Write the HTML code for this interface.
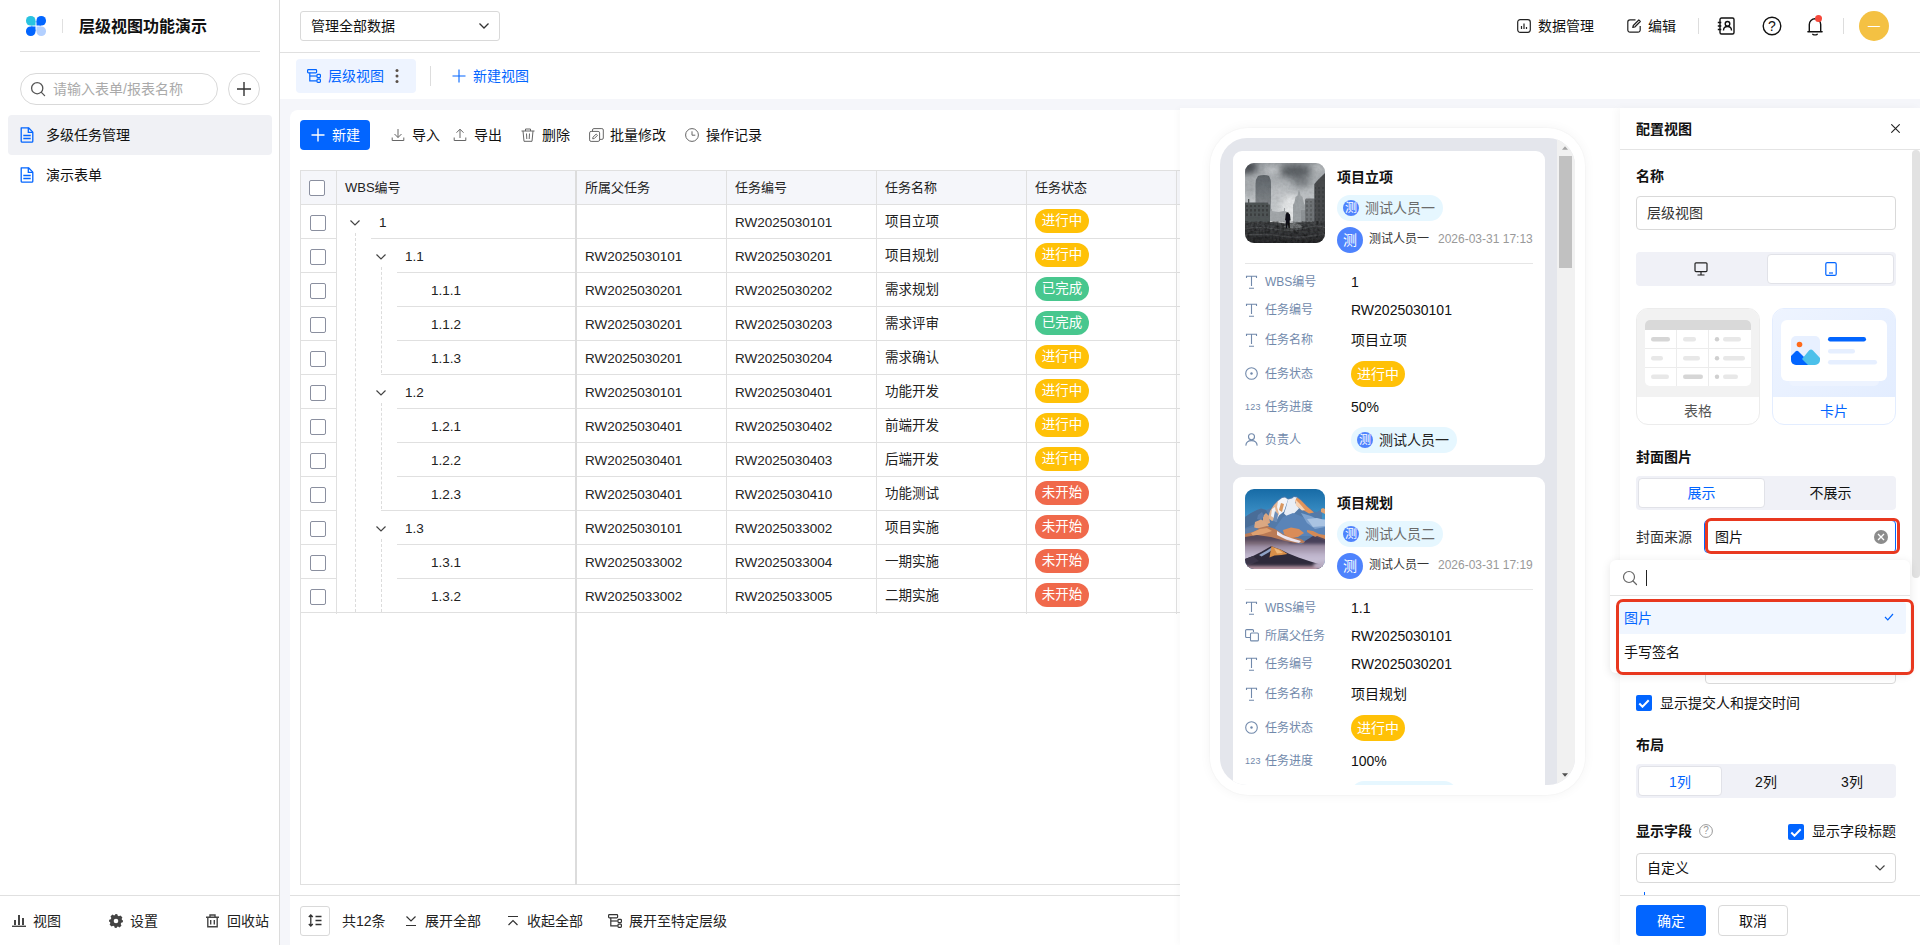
<!DOCTYPE html>
<html lang="zh-CN">
<head>
<meta charset="utf-8">
<title>层级视图功能演示</title>
<style>
*{box-sizing:border-box;margin:0;padding:0}
html,body{width:1920px;height:945px;overflow:hidden;background:#fff}
body{font-family:"Liberation Sans","Noto Sans CJK SC",sans-serif;font-size:14px;color:#1f2329;position:relative}
.abs{position:absolute}
.t{position:absolute;white-space:nowrap;line-height:20px;height:20px}
svg{display:block}
/* sidebar */
#side{position:absolute;left:0;top:0;width:280px;height:945px;background:#fff;border-right:1px solid #dcdcdc}
#main{position:absolute;left:280px;top:0;width:1640px;height:945px;background:#f5f6fa}
#top{position:absolute;left:0;top:0;width:1640px;height:53px;background:#fff;border-bottom:1px solid #e0e0e0}
#tabs{position:absolute;left:0;top:53px;width:1640px;height:46px;background:#fff}
.th{color:#222;font-size:13px}
.td{color:#222;font-size:13.5px}
.tag{height:24px;line-height:24px;border-radius:12px;width:54px;text-align:center;color:#fff;font-size:13.5px;white-space:nowrap}
.av16{width:16px;height:16px;border-radius:8px;background:#4e83fd;color:#fff;font-size:12px;line-height:16px;text-align:center;overflow:hidden}
.av26{width:26px;height:26px;border-radius:13px;background:#4e83fd;color:#fff;font-size:14px;line-height:26px;text-align:center}
.seg{background:#f0f1f7;border-radius:4px}
.segon{background:#fff;border:1px solid #e1e2e8;border-radius:4px}
</style>
</head>
<body>
<div id="side">
  <svg class="abs" style="left:26px;top:16px" width="20" height="20" viewBox="0 0 20 20">
    <rect x="0" y="0" width="9.5" height="9.5" rx="4.6" fill="#29c3e0"/>
    <rect x="10.5" y="0" width="9.5" height="9.5" rx="4.6" fill="#0265ff"/>
    <rect x="0" y="10.5" width="9.5" height="9.5" rx="4.6" fill="#0265ff"/>
    <rect x="10.5" y="10.5" width="9.5" height="9.5" rx="4.6" fill="#b3d0ff"/>
    <rect x="5" y="5" width="4.5" height="4.5" fill="#29c3e0"/>
    <rect x="10.5" y="5" width="4.5" height="4.5" fill="#0265ff"/>
    <rect x="5" y="10.5" width="4.5" height="4.5" fill="#0265ff"/>
    <rect x="10.5" y="10.5" width="4.5" height="4.5" fill="#b3d0ff"/>
  </svg>
  <div class="abs" style="left:62px;top:19px;width:1px;height:14px;background:#e0e0e0"></div>
  <div class="t" style="left:79px;top:16px;font-size:16px;font-weight:bold;line-height:22px;height:22px;color:#111">层级视图功能演示</div>
  <div class="abs" style="left:20px;top:51px;width:240px;height:1px;background:#e0e0e0"></div>
  <div class="abs" style="left:20px;top:73px;width:198px;height:32px;border:1px solid #d9d9d9;border-radius:16px"></div>
  <svg class="abs" style="left:30px;top:81px" width="16" height="16" viewBox="0 0 16 16" fill="none" stroke="#555" stroke-width="1.3"><circle cx="7.2" cy="7.2" r="5.6"/><path d="M11.4 11.4L14.6 14.6" stroke-linecap="round"/></svg>
  <div class="t" style="left:53px;top:79px;color:#aaa">请输入表单/报表名称</div>
  <div class="abs" style="left:228px;top:73px;width:32px;height:32px;border:1px solid #d9d9d9;border-radius:16px"></div>
  <svg class="abs" style="left:236px;top:81px" width="16" height="16" viewBox="0 0 16 16" stroke="#333" stroke-width="1.4"><path d="M8 1v14M1 8h14"/></svg>
  <div class="abs" style="left:8px;top:115px;width:264px;height:40px;background:#f0f1f5;border-radius:4px"></div>
  <svg class="abs docic" style="left:20px;top:127px" width="14" height="16" viewBox="0 0 14 16" fill="none" stroke="#0265ff" stroke-width="1.3"><path d="M1.2.8h7.3l4.3 4.3v9.1a1 1 0 0 1-1 1H2.2a1 1 0 0 1-1-1z" stroke-linejoin="round"/><path d="M8.3.8v4.5h4.5M3.3 8.5h7.4M3.3 11.5h7.4"/></svg>
  <div class="t" style="left:46px;top:125px;color:#111">多级任务管理</div>
  <svg class="abs docic" style="left:20px;top:167px" width="14" height="16" viewBox="0 0 14 16" fill="none" stroke="#0265ff" stroke-width="1.3"><path d="M1.2.8h7.3l4.3 4.3v9.1a1 1 0 0 1-1 1H2.2a1 1 0 0 1-1-1z" stroke-linejoin="round"/><path d="M8.3.8v4.5h4.5M3.3 8.5h7.4M3.3 11.5h7.4"/></svg>
  <div class="t" style="left:46px;top:165px;color:#111">演示表单</div>
  <div class="abs" style="left:0;top:895px;width:279px;height:1px;background:#e0e0e0"></div>
  <svg class="abs" style="left:12px;top:914px" width="14" height="14" viewBox="0 0 14 14" fill="#444"><rect x="0" y="11.6" width="14" height="1.4"/><rect x="2" y="6" width="2" height="5"/><rect x="6" y="1" width="2" height="10"/><rect x="10" y="4" width="2" height="7"/></svg>
  <div class="t" style="left:33px;top:911px;color:#222">视图</div>
  <svg class="abs" style="left:109px;top:914px" width="14" height="14" viewBox="0 0 14 14"><path fill="#444" d="M7 0l1.3.2.5 1.6 1.1.5 1.5-.8 1.1.9 .9 1.1-.8 1.5.5 1.1 1.6.5L14 7l-.2 1.300-1.600.500-.500 1.100.800 1.500-.900 1.100-1.100.900-1.500-.800-1.100.500-.500 1.600L7 14l-1.300-.200-.500-1.600-1.100-.500-1.500.800-1.100-.900-.900-1.100.800-1.500-.500-1.100-1.600-.500L0 7l.2-1.300 1.600-.5.5-1.100-.8-1.500.9-1.100 1.100-.9 1.500.8 1.100-.5.5-1.600z"/><circle cx="7" cy="7" r="2.3" fill="#fff"/></svg>
  <div class="t" style="left:130px;top:911px;color:#222">设置</div>
  <svg class="abs" style="left:206px;top:914px" width="13" height="14" viewBox="0 0 13 14" fill="none" stroke="#444" stroke-width="1.4"><path d="M0 3.2h13M4 3V1h5v2M1.800 3.500v9.300h9.400V3.500M4.700 6v4.500M8.300 6v4.500"/></svg>
  <div class="t" style="left:227px;top:911px;color:#222">回收站</div>
</div>
<div id="main">
  <div id="top">
    <div class="abs" style="left:20px;top:11px;width:200px;height:30px;border:1px solid #d9d9d9;border-radius:3px"></div>
    <div class="t" style="left:31px;top:16px;color:#111">管理全部数据</div>
    <svg class="abs" style="left:198px;top:22px" width="12" height="8" viewBox="0 0 12 8" fill="none" stroke="#333" stroke-width="1.3"><path d="M1.500 1.500l4.500 4.500 4.500-4.500"/></svg>
    <svg class="abs" style="left:1237px;top:19px" width="14" height="14" viewBox="0 0 14 14" fill="none" stroke="#222" stroke-width="1.2"><rect x=".7" y=".7" width="12.600" height="12.600" rx="2.500"/><path d="M4.500 7v3M7 4.500v5.500M9.500 8v2"/></svg>
    <div class="t" style="left:1258px;top:16px;color:#111">数据管理</div>
    <svg class="abs" style="left:1347px;top:19px" width="15" height="14" viewBox="0 0 15 14" fill="none" stroke="#222" stroke-width="1.2"><path d="M8.500.8H3a2.200 2.200 0 0 0-2.200 2.200v8a2.200 2.200 0 0 0 2.200 2.200h8a2.200 2.200 0 0 0 2.200-2.200V7"/><path d="M11.800 1l1.500 1.500-5.500 5.500-2 .5.500-2z" stroke-linejoin="round"/></svg>
    <div class="t" style="left:1368px;top:16px;color:#111">编辑</div>
    <div class="abs" style="left:1418px;top:18px;width:1px;height:16px;background:#ddd"></div>
    <svg class="abs" style="left:1437px;top:17px" width="18" height="18" viewBox="0 0 18 18" fill="none" stroke="#111" stroke-width="1.4"><rect x="3" y="1" width="14" height="16" rx="1.500"/><path d="M.8 5.500h3.500M.8 9h3.500M.8 12.500h3.500"/><circle cx="10.500" cy="6.800" r="2.300"/><path d="M6.500 13.500c0-2.600 1.700-4 4-4s4 1.400 4 4"/></svg>
    <svg class="abs" style="left:1482px;top:16px" width="20" height="20" viewBox="0 0 20 20" fill="none" stroke="#111" stroke-width="1.4"><circle cx="10" cy="10" r="8.800"/></svg>
    <div class="t" style="left:1482px;top:16px;width:20px;text-align:center;font-size:14px;color:#111">?</div>
    <svg class="abs" style="left:1527px;top:17px" width="16" height="19" viewBox="0 0 16 19" fill="none" stroke="#111" stroke-width="1.400"><path d="M2.300 14.800V7.500a5.700 5.700 0 0 1 11.400 0v7.300"/><path d="M.9 14.800h14.200" stroke-linecap="round"/><path d="M5.800 17.300q2.200 1.200 4.400 0" stroke-linecap="round"/></svg>
    <div class="abs" style="left:1535px;top:15px;width:7px;height:7px;border-radius:4px;background:#f5483b"></div>
    <div class="abs" style="left:1563px;top:18px;width:1px;height:16px;background:#ddd"></div>
    <div class="abs" style="left:1579px;top:11px;width:30px;height:30px;border-radius:15px;background:#f4c143"></div>
    <div class="t" style="left:1579px;top:16px;width:30px;text-align:center;font-size:12px;color:#fff">—</div>
  </div>
  <div id="tabs">
    <div class="abs" style="left:16px;top:6px;width:120px;height:34px;background:#eef4ff;border-radius:4px"></div>
    <svg class="abs treeic" style="left:27px;top:16px" width="15" height="14" viewBox="0 0 15 14" fill="none" stroke="#0265ff" stroke-width="1.200"><rect x=".6" y=".6" width="9" height="3.200" rx=".8"/><path d="M2.800 3.800v8h7"/><path d="M2.800 7h7"/><rect x="10" y="5.400" width="3.400" height="3.200" rx=".8"/><rect x="10" y="10.200" width="3.400" height="3.200" rx=".8"/></svg>
    <div class="t" style="left:48px;top:13px;color:#0265ff">层级视图</div>
    <svg class="abs" style="left:115px;top:15px" width="4" height="16" viewBox="0 0 4 16" fill="#5a5048"><circle cx="2" cy="2.500" r="1.500"/><circle cx="2" cy="8" r="1.500"/><circle cx="2" cy="13.500" r="1.500"/></svg>
    <div class="abs" style="left:150px;top:13px;width:1px;height:20px;background:#ddd"></div>
    <svg class="abs" style="left:172px;top:16px" width="14" height="14" viewBox="0 0 14 14" stroke="#0265ff" stroke-width="1.100"><path d="M7 .5v13M.5 7h13"/></svg>
    <div class="t" style="left:193px;top:13px;color:#0265ff">新建视图</div>
  </div>

  <!--TABLE-->
  <div id="card" class="abs" style="left:10px;top:110px;width:1630px;height:785px;background:#fff;border-radius:8px 0 0 0"></div>
  <div id="foot" class="abs" style="left:10px;top:895px;width:1630px;height:50px;background:#fff;border-top:1px solid #e0e0e0"></div>
  <div class="abs" style="left:20px;top:120px;width:70px;height:30px;background:#0265ff;border-radius:4px"></div>
  <svg class="abs" style="left:31px;top:128px" width="14" height="14" viewBox="0 0 14 14" stroke="#fff" stroke-width="1.4"><path d="M7 .5v13M.5 7h13"/></svg>
  <div class="t" style="left:52px;top:125px;color:#fff">新建</div>
  <svg class="abs" style="left:111px;top:128px" width="14" height="14" viewBox="0 0 14 14" fill="none" stroke="#666" stroke-width="1"><path d="M7 1v8.500M3.500 6l3.500 3.500 3.500-3.500M1.200 9.500v3h11.600v-3"/></svg>
  <div class="t" style="left:132px;top:125px;color:#111">导入</div>
  <svg class="abs" style="left:173px;top:128px" width="14" height="14" viewBox="0 0 14 14" fill="none" stroke="#666" stroke-width="1"><path d="M7 10V1.200M3.500 4.700L7 1.200l3.500 3.500M1.200 9.500v3h11.600v-3"/></svg>
  <div class="t" style="left:194px;top:125px;color:#111">导出</div>
  <svg class="abs" style="left:241px;top:128px" width="14" height="14" viewBox="0 0 14 14" fill="none" stroke="#666" stroke-width="1"><path d="M.5 3h13M4.500 3V1h5v2M2 3l1 10.300h8l1-10.300M5.500 5.500l.3 5.500M8.500 5.500l-.3 5.500"/></svg>
  <div class="t" style="left:262px;top:125px;color:#111">删除</div>
  <svg class="abs" style="left:309px;top:128px" width="15" height="14" viewBox="0 0 15 14" fill="none" stroke="#666" stroke-width="1"><rect x=".6" y="3.400" width="10" height="10" rx="1.500"/><path d="M3.500 3.400V2a1.400 1.400 0 0 1 1.400-1.400h8a1.400 1.400 0 0 1 1.400 1.400v8a1.400 1.400 0 0 1-1.400 1.400h-2.300"/><path d="M7.200 6l1.300 1.300-3.200 3.200-1.600.3.300-1.600z" stroke-linejoin="round"/></svg>
  <div class="t" style="left:330px;top:125px;color:#111">批量修改</div>
  <svg class="abs" style="left:405px;top:128px" width="14" height="14" viewBox="0 0 14 14" fill="none" stroke="#666" stroke-width="1"><circle cx="7" cy="7" r="6.400"/><path d="M7 3.300V7.200h3.300"/></svg>
  <div class="t" style="left:426px;top:125px;color:#111">操作记录</div>
  <div id="tbl" class="abs" style="left:20px;top:170px;width:880px;height:715px;border:1px solid #e0e0e0;border-right:none"></div>
  <div class="abs" style="left:21px;top:171px;width:879px;height:33px;background:#f5f6fa"></div>
  <div class="abs" style="left:21px;top:204px;width:879px;height:1px;background:#e0e0e0"></div>
  <div class="abs" style="left:56px;top:171px;width:1px;height:443px;background:#e0e0e0"></div>
  <div class="abs" style="left:295px;top:171px;width:2px;height:714px;background:#dcdcdc"></div>
  <div class="abs" style="left:446px;top:171px;width:1px;height:443px;background:#e0e0e0"></div>
  <div class="abs" style="left:596px;top:171px;width:1px;height:443px;background:#e0e0e0"></div>
  <div class="abs" style="left:746px;top:171px;width:1px;height:443px;background:#e0e0e0"></div>
  <div class="abs" style="left:896px;top:171px;width:1px;height:443px;background:#e0e0e0"></div>
  <div class="abs" style="left:29px;top:180px;width:16px;height:16px;border:1px solid #8a8f9f;border-radius:2px;background:#fff"></div>
  <div class="t th" style="left:65px;top:178px">WBS编号</div>
  <div class="t th" style="left:305px;top:178px">所属父任务</div>
  <div class="t th" style="left:455px;top:178px">任务编号</div>
  <div class="t th" style="left:605px;top:178px">任务名称</div>
  <div class="t th" style="left:755px;top:178px">任务状态</div>
  <div class="abs" style="left:21px;top:238px;width:35px;height:1px;background:#e0e0e0"></div>
  <div class="abs" style="left:30px;top:215px;width:16px;height:16px;border:1px solid #8a8f9f;border-radius:2px;background:#fff"></div>
  <svg class="abs" style="left:69px;top:219px" width="12" height="8" viewBox="0 0 12 8" fill="none" stroke="#444" stroke-width="1.2"><path d="M1.5 1.500l4.500 4.500 4.500-4.500"/></svg>
  <div class="t td" style="left:99px;top:213px">1</div>
  <div class="t td" style="left:455px;top:213px">RW2025030101</div>
  <div class="t td" style="left:605px;top:212px">项目立项</div>
  <div class="abs tag" style="left:755px;top:209px;background:#ffc107">进行中</div>
  <div class="abs" style="left:297px;top:238px;width:603px;height:1px;background:#e0e0e0"></div>
  <div class="abs" style="left:21px;top:272px;width:35px;height:1px;background:#e0e0e0"></div>
  <div class="abs" style="left:30px;top:249px;width:16px;height:16px;border:1px solid #8a8f9f;border-radius:2px;background:#fff"></div>
  <svg class="abs" style="left:95px;top:253px" width="12" height="8" viewBox="0 0 12 8" fill="none" stroke="#444" stroke-width="1.2"><path d="M1.5 1.500l4.500 4.500 4.500-4.500"/></svg>
  <div class="t td" style="left:125px;top:247px">1.1</div>
  <div class="t td" style="left:305px;top:247px">RW2025030101</div>
  <div class="t td" style="left:455px;top:247px">RW2025030201</div>
  <div class="t td" style="left:605px;top:246px">项目规划</div>
  <div class="abs tag" style="left:755px;top:243px;background:#ffc107">进行中</div>
  <div class="abs" style="left:297px;top:272px;width:603px;height:1px;background:#e0e0e0"></div>
  <div class="abs" style="left:21px;top:306px;width:35px;height:1px;background:#e0e0e0"></div>
  <div class="abs" style="left:30px;top:283px;width:16px;height:16px;border:1px solid #8a8f9f;border-radius:2px;background:#fff"></div>
  <div class="t td" style="left:151px;top:281px">1.1.1</div>
  <div class="t td" style="left:305px;top:281px">RW2025030201</div>
  <div class="t td" style="left:455px;top:281px">RW2025030202</div>
  <div class="t td" style="left:605px;top:280px">需求规划</div>
  <div class="abs tag" style="left:755px;top:277px;background:#48c78e">已完成</div>
  <div class="abs" style="left:297px;top:306px;width:603px;height:1px;background:#e0e0e0"></div>
  <div class="abs" style="left:21px;top:340px;width:35px;height:1px;background:#e0e0e0"></div>
  <div class="abs" style="left:30px;top:317px;width:16px;height:16px;border:1px solid #8a8f9f;border-radius:2px;background:#fff"></div>
  <div class="t td" style="left:151px;top:315px">1.1.2</div>
  <div class="t td" style="left:305px;top:315px">RW2025030201</div>
  <div class="t td" style="left:455px;top:315px">RW2025030203</div>
  <div class="t td" style="left:605px;top:314px">需求评审</div>
  <div class="abs tag" style="left:755px;top:311px;background:#48c78e">已完成</div>
  <div class="abs" style="left:297px;top:340px;width:603px;height:1px;background:#e0e0e0"></div>
  <div class="abs" style="left:21px;top:374px;width:35px;height:1px;background:#e0e0e0"></div>
  <div class="abs" style="left:30px;top:351px;width:16px;height:16px;border:1px solid #8a8f9f;border-radius:2px;background:#fff"></div>
  <div class="t td" style="left:151px;top:349px">1.1.3</div>
  <div class="t td" style="left:305px;top:349px">RW2025030201</div>
  <div class="t td" style="left:455px;top:349px">RW2025030204</div>
  <div class="t td" style="left:605px;top:348px">需求确认</div>
  <div class="abs tag" style="left:755px;top:345px;background:#ffc107">进行中</div>
  <div class="abs" style="left:297px;top:374px;width:603px;height:1px;background:#e0e0e0"></div>
  <div class="abs" style="left:21px;top:408px;width:35px;height:1px;background:#e0e0e0"></div>
  <div class="abs" style="left:30px;top:385px;width:16px;height:16px;border:1px solid #8a8f9f;border-radius:2px;background:#fff"></div>
  <svg class="abs" style="left:95px;top:389px" width="12" height="8" viewBox="0 0 12 8" fill="none" stroke="#444" stroke-width="1.2"><path d="M1.5 1.500l4.500 4.500 4.500-4.500"/></svg>
  <div class="t td" style="left:125px;top:383px">1.2</div>
  <div class="t td" style="left:305px;top:383px">RW2025030101</div>
  <div class="t td" style="left:455px;top:383px">RW2025030401</div>
  <div class="t td" style="left:605px;top:382px">功能开发</div>
  <div class="abs tag" style="left:755px;top:379px;background:#ffc107">进行中</div>
  <div class="abs" style="left:297px;top:408px;width:603px;height:1px;background:#e0e0e0"></div>
  <div class="abs" style="left:21px;top:442px;width:35px;height:1px;background:#e0e0e0"></div>
  <div class="abs" style="left:30px;top:419px;width:16px;height:16px;border:1px solid #8a8f9f;border-radius:2px;background:#fff"></div>
  <div class="t td" style="left:151px;top:417px">1.2.1</div>
  <div class="t td" style="left:305px;top:417px">RW2025030401</div>
  <div class="t td" style="left:455px;top:417px">RW2025030402</div>
  <div class="t td" style="left:605px;top:416px">前端开发</div>
  <div class="abs tag" style="left:755px;top:413px;background:#ffc107">进行中</div>
  <div class="abs" style="left:297px;top:442px;width:603px;height:1px;background:#e0e0e0"></div>
  <div class="abs" style="left:21px;top:476px;width:35px;height:1px;background:#e0e0e0"></div>
  <div class="abs" style="left:30px;top:453px;width:16px;height:16px;border:1px solid #8a8f9f;border-radius:2px;background:#fff"></div>
  <div class="t td" style="left:151px;top:451px">1.2.2</div>
  <div class="t td" style="left:305px;top:451px">RW2025030401</div>
  <div class="t td" style="left:455px;top:451px">RW2025030403</div>
  <div class="t td" style="left:605px;top:450px">后端开发</div>
  <div class="abs tag" style="left:755px;top:447px;background:#ffc107">进行中</div>
  <div class="abs" style="left:297px;top:476px;width:603px;height:1px;background:#e0e0e0"></div>
  <div class="abs" style="left:21px;top:510px;width:35px;height:1px;background:#e0e0e0"></div>
  <div class="abs" style="left:30px;top:487px;width:16px;height:16px;border:1px solid #8a8f9f;border-radius:2px;background:#fff"></div>
  <div class="t td" style="left:151px;top:485px">1.2.3</div>
  <div class="t td" style="left:305px;top:485px">RW2025030401</div>
  <div class="t td" style="left:455px;top:485px">RW2025030410</div>
  <div class="t td" style="left:605px;top:484px">功能测试</div>
  <div class="abs tag" style="left:755px;top:481px;background:#f0694b">未开始</div>
  <div class="abs" style="left:297px;top:510px;width:603px;height:1px;background:#e0e0e0"></div>
  <div class="abs" style="left:21px;top:544px;width:35px;height:1px;background:#e0e0e0"></div>
  <div class="abs" style="left:30px;top:521px;width:16px;height:16px;border:1px solid #8a8f9f;border-radius:2px;background:#fff"></div>
  <svg class="abs" style="left:95px;top:525px" width="12" height="8" viewBox="0 0 12 8" fill="none" stroke="#444" stroke-width="1.2"><path d="M1.5 1.500l4.500 4.500 4.500-4.500"/></svg>
  <div class="t td" style="left:125px;top:519px">1.3</div>
  <div class="t td" style="left:305px;top:519px">RW2025030101</div>
  <div class="t td" style="left:455px;top:519px">RW2025033002</div>
  <div class="t td" style="left:605px;top:518px">项目实施</div>
  <div class="abs tag" style="left:755px;top:515px;background:#f0694b">未开始</div>
  <div class="abs" style="left:297px;top:544px;width:603px;height:1px;background:#e0e0e0"></div>
  <div class="abs" style="left:21px;top:578px;width:35px;height:1px;background:#e0e0e0"></div>
  <div class="abs" style="left:30px;top:555px;width:16px;height:16px;border:1px solid #8a8f9f;border-radius:2px;background:#fff"></div>
  <div class="t td" style="left:151px;top:553px">1.3.1</div>
  <div class="t td" style="left:305px;top:553px">RW2025033002</div>
  <div class="t td" style="left:455px;top:553px">RW2025033004</div>
  <div class="t td" style="left:605px;top:552px">一期实施</div>
  <div class="abs tag" style="left:755px;top:549px;background:#f0694b">未开始</div>
  <div class="abs" style="left:297px;top:578px;width:603px;height:1px;background:#e0e0e0"></div>
  <div class="abs" style="left:21px;top:612px;width:35px;height:1px;background:#e0e0e0"></div>
  <div class="abs" style="left:30px;top:589px;width:16px;height:16px;border:1px solid #8a8f9f;border-radius:2px;background:#fff"></div>
  <div class="t td" style="left:151px;top:587px">1.3.2</div>
  <div class="t td" style="left:305px;top:587px">RW2025033002</div>
  <div class="t td" style="left:455px;top:587px">RW2025033005</div>
  <div class="t td" style="left:605px;top:586px">二期实施</div>
  <div class="abs tag" style="left:755px;top:583px;background:#f0694b">未开始</div>
  <div class="abs" style="left:297px;top:612px;width:603px;height:1px;background:#e0e0e0"></div>
  <div class="abs" style="left:91px;top:238px;width:204px;height:1px;background:#e0e0e0"></div>
  <div class="abs" style="left:117px;top:272px;width:178px;height:1px;background:#e0e0e0"></div>
  <div class="abs" style="left:117px;top:306px;width:178px;height:1px;background:#e0e0e0"></div>
  <div class="abs" style="left:117px;top:340px;width:178px;height:1px;background:#e0e0e0"></div>
  <div class="abs" style="left:101px;top:374px;width:194px;height:1px;background:#e0e0e0"></div>
  <div class="abs" style="left:117px;top:408px;width:178px;height:1px;background:#e0e0e0"></div>
  <div class="abs" style="left:117px;top:442px;width:178px;height:1px;background:#e0e0e0"></div>
  <div class="abs" style="left:117px;top:476px;width:178px;height:1px;background:#e0e0e0"></div>
  <div class="abs" style="left:101px;top:510px;width:194px;height:1px;background:#e0e0e0"></div>
  <div class="abs" style="left:117px;top:544px;width:178px;height:1px;background:#e0e0e0"></div>
  <div class="abs" style="left:117px;top:578px;width:178px;height:1px;background:#e0e0e0"></div>
  <div class="abs" style="left:57px;top:612px;width:238px;height:1px;background:#e0e0e0"></div>
  <div class="abs" style="left:75px;top:233px;width:0;height:379px;border-left:1px dashed #dcdcdc"></div>
  <div class="abs" style="left:101px;top:267px;width:0;height:106px;border-left:1px dashed #dcdcdc"></div>
  <div class="abs" style="left:101px;top:403px;width:0;height:106px;border-left:1px dashed #dcdcdc"></div>
  <div class="abs" style="left:101px;top:539px;width:0;height:73px;border-left:1px dashed #dcdcdc"></div>
  <div class="abs" style="left:20px;top:906px;width:30px;height:30px;border:1px solid #d9d9d9;border-radius:3px"></div>
  <svg class="abs" style="left:28px;top:914px" width="14" height="13" viewBox="0 0 14 13" fill="none" stroke="#333" stroke-width="1.300"><path d="M2.800 1v11M.8 3l2-2 2 2M.8 10l2 2 2-2M7.500 2.500h6M7.500 6.500h6M7.500 10.500h6"/></svg>
  <div class="t" style="left:62px;top:911px;color:#222">共12条</div>
  <svg class="abs" style="left:125px;top:915px" width="12" height="12" viewBox="0 0 12 12" fill="none" stroke="#333" stroke-width="1.200"><path d="M1.500 1.500l4.500 4.500 4.500-4.500M1 10.500h10"/></svg>
  <div class="t" style="left:145px;top:911px;color:#222">展开全部</div>
  <svg class="abs" style="left:227px;top:915px" width="12" height="12" viewBox="0 0 12 12" fill="none" stroke="#333" stroke-width="1.200"><path d="M1 1.500h10M1.500 10l4.500-4.500 4.500 4.500"/></svg>
  <div class="t" style="left:247px;top:911px;color:#222">收起全部</div>
  <svg class="abs" style="left:328px;top:914px" width="15" height="14" viewBox="0 0 15 14" fill="none" stroke="#333" stroke-width="1.200"><rect x=".6" y=".6" width="9" height="3.200" rx=".8"/><path d="M2.800 3.800v8h7"/><path d="M2.800 7h7"/><rect x="10" y="5.400" width="3.400" height="3.200" rx=".8"/><rect x="10" y="10.200" width="3.400" height="3.200" rx=".8"/></svg>
  <div class="t" style="left:349px;top:911px;color:#222">展开至特定层级</div>
  <!--/TABLE-->
</div>

<!--PREVIEW-->
<div id="pv" class="abs" style="left:1180px;top:108px;width:440px;height:837px;background:#fff;box-shadow:-3px 0 6px rgba(0,0,0,.025)"></div>
<div id="phone" class="abs" style="left:1210px;top:128px;width:375px;height:667px;border-radius:38px;background:#fff;box-shadow:0 0 12px rgba(0,0,0,.05),0 0 0 1px rgba(0,0,0,.015)"></div>
<div id="scr" class="abs" style="left:1220px;top:138px;width:355px;height:647px;border-radius:27px;background:#e4e6ec;overflow:hidden">
<div class="abs" style="left:337px;top:0;width:18px;height:647px;background:#f1f1f1"></div>
<div class="abs" style="left:339px;top:18px;width:13px;height:112px;background:#c1c1c1"></div>
<svg class="abs" style="left:342px;top:8px" width="6" height="4" viewBox="0 0 6 4"><path d="M0 3.700L3 .3 6 3.700z" fill="#a3a3a3"/></svg>
<svg class="abs" style="left:342px;top:635px" width="6" height="4" viewBox="0 0 6 4"><path d="M0 .3L3 3.700 6 .3z" fill="#505050"/></svg>
<div class="abs" style="left:13px;top:13px;width:312px;height:314px;background:#fff;border-radius:9px"></div>
<svg class="abs" style="left:25px;top:25px;border-radius:9px" width="80" height="80" viewBox="0 0 80 80">
<defs><linearGradient id="sk1" x1="0" y1="0" x2="0" y2="1"><stop offset="0" stop-color="#979ca0"/><stop offset=".4" stop-color="#bcc0c3"/><stop offset=".75" stop-color="#d2d5d7"/></linearGradient>
<linearGradient id="tw1" x1="0" y1="0" x2="0" y2="1"><stop offset="0" stop-color="#5f656a"/><stop offset=".7" stop-color="#7d8286"/><stop offset="1" stop-color="#969b9f"/></linearGradient>
<linearGradient id="gr1" x1="0" y1="0" x2="0" y2="1"><stop offset="0" stop-color="#47494b"/><stop offset="1" stop-color="#2b2c2e"/></linearGradient>
<filter id="bl1" x="-20%" y="-20%" width="140%" height="140%"><feGaussianBlur stdDeviation=".55"/></filter><filter id="bl1b" x="-50%" y="-50%" width="200%" height="200%"><feGaussianBlur stdDeviation="3.200"/></filter>
<filter id="nz1" x="0" y="0" width="100%" height="100%"><feTurbulence type="fractalNoise" baseFrequency=".35" numOctaves="2" seed="3"/><feColorMatrix values="0 0 0 0 0  0 0 0 0 0  0 0 0 0 0  .9 .9 .9 0 -1.050"/></filter><pattern id="win" width="4" height="4.500" patternUnits="userSpaceOnUse"><rect x="1" y="1" width="2" height="2.500" fill="#2a2c2e" opacity=".55"/></pattern></defs>
<rect width="80" height="80" fill="url(#sk1)"/>
<g filter="url(#bl1b)"><ellipse cx="3" cy="4" rx="9" ry="7" fill="#4c5054"/><ellipse cx="50" cy="8" rx="16" ry="7" fill="#5d6266"/><ellipse cx="57" cy="19" rx="10" ry="5" fill="#7b8084"/><ellipse cx="27" cy="7" rx="8" ry="4" fill="#c6c9cc"/><ellipse cx="74" cy="5" rx="5" ry="4" fill="#c6c9cb"/><ellipse cx="5" cy="24" rx="7" ry="8" fill="#a6aaad"/><ellipse cx="46" cy="46" rx="10" ry="14" fill="#e6e8e9"/><ellipse cx="34" cy="30" rx="7" ry="6" fill="#c0c3c6"/><ellipse cx="68" cy="26" rx="5" ry="5" fill="#b9bdc0"/></g>
<g filter="url(#bl1)">
<path d="M10.500 50V21q0-5 2.500-8 2.500-1 6-1 3.500 0 5 1 2 3 2 8V50z" fill="url(#tw1)"/>
<path d="M24 58V49l2-1v-2h1v2l6 1 6-1v-3h1v3l2 1v10z" fill="#a3a7aa"/>
<path d="M48 60V42l1.500-3 1-5 2-1.500 1-5 .5-.5.500.500 1 5 2 1.500 1 5 1.500 3V60z" fill="#9ea3a6"/>
<path d="M56 60V47h5v13z" fill="#8f9497"/>
<path d="M60 60V36.500l1-1h8.500l.5 1V60z" fill="#717578"/>
<rect x="61" y="38" width="8" height="20" fill="url(#win)" opacity=".5"/>
<path d="M0 61V39.500h3V36h1.300v3.500H23l.5 2h1.500V61z" fill="#505457"/>
<rect x="1" y="42" width="22" height="13" fill="url(#win)"/>
<path d="M69.300 80V21l4-4.500 6.700-6.500V80z" fill="#484b4e"/>
<rect x="70" y="24" width="10" height="36" fill="url(#win)" opacity=".7"/>
<path d="M0 59.500q20-2 40 1 20-2.500 40-1V80H0z" fill="url(#gr1)"/>
<path d="M42 62q6-4 12-1l4 3q-10 3-20 0z" fill="#7d8082"/>
<path d="M0 66q15-3 30 0t30-1 20 0" stroke="#55585a" stroke-width="1.200" fill="none"/>
<path d="M0 72q20-2 36 1t44-2" stroke="#4b4d4f" stroke-width="1.500" fill="none"/>
</g>
<rect x="0" y="58" width="80" height="22" filter="url(#nz1)" opacity=".55"/><rect x="0" y="0" width="80" height="58" filter="url(#nz1)" opacity=".07"/><path d="M41.200 50.600a1.300 1.300 0 1 1 2.600 0l1.200 1 .6 5.600-.9.300.2 7.800h-1.500l-.5-5.400-.7 5.400h-1.500l.3-7.800-.9-.3.600-5.600z" fill="#101112" filter="url(#bl1)"/>
</svg>
<div class="t" style="left:117px;top:29px;font-weight:bold;color:#111">项目立项</div>
<div class="abs" style="left:117px;top:57px;width:106px;height:26px;border-radius:13px;background:#e6f7ff"></div><div class="abs av16" style="left:123px;top:62px">测</div><div class="t" style="left:145px;top:60px;color:#6b6b6b">测试人员一</div>
<div class="abs av26" style="left:117px;top:89px">测</div>
<div class="t" style="left:149px;top:91px;font-size:12px;color:#333">测试人员一</div>
<div class="t" style="left:218px;top:91px;font-size:12px;color:#999">2026-03-31 17:13</div>
<div class="abs" style="left:25px;top:125px;width:288px;height:1px;background:#e6e6e6"></div>
<svg class="abs" style="left:25px;top:137px" width="13" height="14" viewBox="0 0 13 14" fill="none" stroke="#7189ab" stroke-width="1.100"><path d="M1.500 3V1.200h10V3M6.500 1.200V11M4 13.200h5"/></svg>
<div class="t" style="left:45px;top:134px;font-size:12px;color:#7189ab">WBS编号</div>
<div class="t" style="left:131px;top:134px;color:#111">1</div>
<svg class="abs" style="left:25px;top:165px" width="13" height="14" viewBox="0 0 13 14" fill="none" stroke="#7189ab" stroke-width="1.100"><path d="M1.500 3V1.200h10V3M6.500 1.200V11M4 13.200h5"/></svg>
<div class="t" style="left:45px;top:162px;font-size:12px;color:#7189ab">任务编号</div>
<div class="t" style="left:131px;top:162px;color:#111">RW2025030101</div>
<svg class="abs" style="left:25px;top:195px" width="13" height="14" viewBox="0 0 13 14" fill="none" stroke="#7189ab" stroke-width="1.100"><path d="M1.500 3V1.200h10V3M6.500 1.200V11M4 13.200h5"/></svg>
<div class="t" style="left:45px;top:192px;font-size:12px;color:#7189ab">任务名称</div>
<div class="t" style="left:131px;top:192px;color:#111">项目立项</div>
<svg class="abs" style="left:25px;top:229px" width="13" height="13" viewBox="0 0 13 13" fill="none" stroke="#7189ab" stroke-width="1.100"><circle cx="6.500" cy="6.500" r="5.800"/><circle cx="6.500" cy="6.500" r="1.200" fill="#7189ab" stroke="none"/></svg>
<div class="t" style="left:45px;top:226px;font-size:12px;color:#7189ab">任务状态</div>
<div class="abs" style="left:131px;top:223px;width:54px;height:26px;line-height:26px;border-radius:13px;background:#ffc107;color:#fff;text-align:center;font-size:14px">进行中</div>
<div class="t" style="left:25px;top:259px;font-size:9px;color:#7189ab;letter-spacing:.2px">123</div>
<div class="t" style="left:45px;top:259px;font-size:12px;color:#7189ab">任务进度</div>
<div class="t" style="left:131px;top:259px;color:#111">50%</div>
<svg class="abs" style="left:25px;top:295px" width="13" height="13" viewBox="0 0 13 13" fill="none" stroke="#7189ab" stroke-width="1.100"><circle cx="6.500" cy="3.800" r="3"/><path d="M.8 12.600c.3-3.400 2.600-5 5.700-5s5.400 1.600 5.700 5"/></svg>
<div class="t" style="left:45px;top:292px;font-size:12px;color:#7189ab">负责人</div>
<div class="abs" style="left:131px;top:289px;width:106px;height:26px;border-radius:13px;background:#e6f7ff"></div><div class="abs av16" style="left:137px;top:294px">测</div><div class="t" style="left:159px;top:292px;color:#222">测试人员一</div>
<div class="abs" style="left:13px;top:339px;width:312px;height:400px;background:#fff;border-radius:9px"></div>
<svg class="abs" style="left:25px;top:351px;border-radius:9px" width="80" height="80" viewBox="0 0 80 80">
<defs><linearGradient id="sk2" x1="0" y1="0" x2="0" y2="1"><stop offset="0" stop-color="#176ba6"/><stop offset=".35" stop-color="#3f93c9"/></linearGradient>
<linearGradient id="ms2" x1="0" y1="0" x2="0" y2="1"><stop offset="0" stop-color="#8f7f95"/><stop offset=".4" stop-color="#c1b8cf"/><stop offset="1" stop-color="#d2ccdc"/></linearGradient>
<filter id="bl2" x="-20%" y="-20%" width="140%" height="140%"><feGaussianBlur stdDeviation=".6"/></filter><filter id="bl2b" x="-50%" y="-50%" width="200%" height="200%"><feGaussianBlur stdDeviation="1.800"/></filter></defs>
<rect width="80" height="80" fill="url(#sk2)"/>
<g filter="url(#bl2)">
<path d="M0 28l6-4 6-3 4-1.500 5 1.500 5-2 3-4 4-4 4-3 3-.6 3 2 4-1 2-1.500 3 .5 4 3 6 6 7 6 3 .5 3-2 2 .5V56H0z" fill="#527aa9"/>
<path d="M0 28l6-4 6-3 4-1.500 5 1.500 3 6-6 6-8 2-10 4z" fill="#4a6d98"/>
<path d="M33 12l4-3 3-.6 3 2-2 6-2 6-5 4-3 6-4-5 1-8z" fill="#f3f5f9"/>
<path d="M43 10.400l4-1 2-1.500 3 .5-2 5 4 6-5 5-6 4-4-4 2-6z" fill="#e9eef6"/>
<path d="M52 8.400l4 3 6 6 7 6-5 1-6-3.500-5-5-3-4z" fill="#e3945a"/>
<path d="M50 10l5 5 5 6-3 .5-6-5z" fill="#f6d3b5"/>
<path d="M29 16l4-4-1 6 2 7-3 5-4 2-4-3 2-7z" fill="#e3b795"/><path d="M27 20l3-2 1 6-2 5-3-2z" fill="#f1f3f7"/><path d="M30 22l3 3-1 8-4-1z" fill="#6c8db8"/>
<path d="M36 14l3 1-2 8-3-2z" fill="#d9975f"/>
<path d="M18 27l3-3 3 3 1 7-5 2-2-4z" fill="#d9a580"/><path d="M13 26l4-3 2 4-3 4-4-1z" fill="#5a7dab"/>
<path d="M10 33l6-2.500 5 2.500 3 4-7 2-8 .5z" fill="#dba882"/>
<path d="M38 28l10-4 10 4 8 8 8 2 6-3v12H36l-6-8z" fill="#5a84b8"/>
<path d="M56 24l10 3 8 4 6-1v8l-10 2-8-6z" fill="#7fa3cf"/>
<path d="M62 30l10-1 8 2v6l-12 1z" fill="#a9c3e2"/>
<path d="M76 20l2-1 2 1v5l-4-2z" fill="#e0a272"/>
<path d="M0 43l6-1 8-3 8-2 8 3 8 5 10 3 8 2 6 4H0z" fill="#b97a55"/><path d="M0 40l8-2 6 2-6 3-8 2z" fill="#5f7fa8"/>
<path d="M6 44l9-4 7-1 5 3-9 3-10 2z" fill="#dea070"/>
<path d="M38 41l8-2.500 8 1.500 5 4-6 4-8 1-6-4z" fill="#d98c58"/>
<path d="M32 42l6 4 8 3 10 3-2 2-12-3-10-5z" fill="#ece6f0"/>
<path d="M62 41l6 1 6 3 6 1v5l-10-3-8-5z" fill="#d48955"/>
<path d="M0 48l12-2 14 2 14 4 16 3 10-5 6-3 8 3v10H0z" fill="#54485c"/>
<path d="M60 52l8-5 12 5v6H58z" fill="#463f5a"/>
</g>
<g filter="url(#bl2b)"><rect x="-6" y="55" width="92" height="30" fill="url(#ms2)"/><rect x="-6" y="52" width="50" height="4" fill="#7a6777"/></g>
<g filter="url(#bl2)">
<path d="M0 70l8-3 8-4 6-3.500 4.500-2.500 3 1.500 6 2 8 4 10 4 12 4 10 3 4 1.500V80H0z" fill="#2f2a3b"/>
<path d="M14 66l8-4.500 4.500-3 1 2-4 3-7 4z" fill="#8fa3c6"/>
<path d="M26.500 57l3 1.500 6 2 7 4.500-6 1-7 .5-5 2 1-6z" fill="#d98f49"/>
<path d="M29 59l5 2 4 3-6 .5z" fill="#f0b878"/>
<path d="M0 70l8-3 6 5-14 6z" fill="#3a3548"/>
</g>
<g filter="url(#bl2b)"><rect x="-6" y="77" width="92" height="8" fill="#b08f9c"/><ellipse cx="80" cy="76" rx="12" ry="3.500" fill="#b9aec4"/></g>
</svg>
<div class="t" style="left:117px;top:355px;font-weight:bold;color:#111">项目规划</div>
<div class="abs" style="left:117px;top:383px;width:106px;height:26px;border-radius:13px;background:#e6f7ff"></div><div class="abs av16" style="left:123px;top:388px">测</div><div class="t" style="left:145px;top:386px;color:#6b6b6b">测试人员二</div>
<div class="abs av26" style="left:117px;top:415px">测</div>
<div class="t" style="left:149px;top:417px;font-size:12px;color:#333">测试人员一</div>
<div class="t" style="left:218px;top:417px;font-size:12px;color:#999">2026-03-31 17:19</div>
<div class="abs" style="left:25px;top:451px;width:288px;height:1px;background:#e6e6e6"></div>
<svg class="abs" style="left:25px;top:463px" width="13" height="14" viewBox="0 0 13 14" fill="none" stroke="#7189ab" stroke-width="1.100"><path d="M1.500 3V1.200h10V3M6.500 1.200V11M4 13.200h5"/></svg>
<div class="t" style="left:45px;top:460px;font-size:12px;color:#7189ab">WBS编号</div>
<div class="t" style="left:131px;top:460px;color:#111">1.1</div>
<svg class="abs" style="left:25px;top:491px" width="14" height="13" viewBox="0 0 14 13" fill="none" stroke="#7189ab" stroke-width="1.100"><path d="M5.500 8.500H1.600a1 1 0 0 1-1-1V1.600a1 1 0 0 1 1-1h5.900a1 1 0 0 1 1 1V3"/><rect x="5.500" y="4" width="7.900" height="7.900" rx="1"/></svg>
<div class="t" style="left:45px;top:488px;font-size:12px;color:#7189ab">所属父任务</div>
<div class="t" style="left:131px;top:488px;color:#111">RW2025030101</div>
<svg class="abs" style="left:25px;top:519px" width="13" height="14" viewBox="0 0 13 14" fill="none" stroke="#7189ab" stroke-width="1.100"><path d="M1.500 3V1.200h10V3M6.500 1.200V11M4 13.200h5"/></svg>
<div class="t" style="left:45px;top:516px;font-size:12px;color:#7189ab">任务编号</div>
<div class="t" style="left:131px;top:516px;color:#111">RW2025030201</div>
<svg class="abs" style="left:25px;top:549px" width="13" height="14" viewBox="0 0 13 14" fill="none" stroke="#7189ab" stroke-width="1.100"><path d="M1.500 3V1.200h10V3M6.500 1.200V11M4 13.200h5"/></svg>
<div class="t" style="left:45px;top:546px;font-size:12px;color:#7189ab">任务名称</div>
<div class="t" style="left:131px;top:546px;color:#111">项目规划</div>
<svg class="abs" style="left:25px;top:583px" width="13" height="13" viewBox="0 0 13 13" fill="none" stroke="#7189ab" stroke-width="1.100"><circle cx="6.500" cy="6.500" r="5.800"/><circle cx="6.500" cy="6.500" r="1.200" fill="#7189ab" stroke="none"/></svg>
<div class="t" style="left:45px;top:580px;font-size:12px;color:#7189ab">任务状态</div>
<div class="abs" style="left:131px;top:577px;width:54px;height:26px;line-height:26px;border-radius:13px;background:#ffc107;color:#fff;text-align:center;font-size:14px">进行中</div>
<div class="t" style="left:25px;top:613px;font-size:9px;color:#7189ab;letter-spacing:.2px">123</div>
<div class="t" style="left:45px;top:613px;font-size:12px;color:#7189ab">任务进度</div>
<div class="t" style="left:131px;top:613px;color:#111">100%</div>
<svg class="abs" style="left:25px;top:649px" width="13" height="13" viewBox="0 0 13 13" fill="none" stroke="#7189ab" stroke-width="1.100"><circle cx="6.500" cy="3.800" r="3"/><path d="M.8 12.600c.3-3.400 2.600-5 5.700-5s5.400 1.600 5.700 5"/></svg>
<div class="t" style="left:45px;top:646px;font-size:12px;color:#7189ab">负责人</div>
<div class="abs" style="left:131px;top:643px;width:106px;height:26px;border-radius:13px;background:#e6f7ff"></div><div class="abs av16" style="left:137px;top:648px">测</div><div class="t" style="left:159px;top:646px;color:#222">测试人员二</div>
</div>
<!--/PREVIEW-->

<!--CONFIG-->
<div id="cfg" class="abs" style="left:1620px;top:108px;width:300px;height:837px;background:#fff;box-shadow:-3px 0 8px rgba(0,0,0,.035)"></div>
<div class="t" style="left:1636px;top:119px;font-weight:bold;color:#111">配置视图</div>
<svg class="abs" style="left:1891px;top:124px" width="9" height="9" viewBox="0 0 9 9" stroke="#222" stroke-width="1.100"><path d="M.3.300l8.400 8.400M8.700.3l-8.400 8.400"/></svg>
<div class="abs" style="left:1620px;top:149px;width:300px;height:1px;background:#e4e4e4"></div>

<div class="abs" style="left:1912px;top:150px;width:8px;height:428px;background:#e2e2e2;border-radius:4px"></div>
<div class="t" style="left:1636px;top:166px;font-weight:bold;color:#111">名称</div>
<div class="abs" style="left:1636px;top:196px;width:260px;height:34px;border:1px solid #d9d9d9;border-radius:4px"></div>
<div class="t" style="left:1647px;top:203px;color:#333">层级视图</div>
<div class="abs seg" style="left:1636px;top:252px;width:260px;height:34px"></div>
<div class="abs segon" style="left:1767px;top:254px;width:127px;height:30px"></div>
<svg class="abs" style="left:1694px;top:262px" width="14" height="14" viewBox="0 0 14 14" fill="none" stroke="#222" stroke-width="1.200"><rect x="1" y=".8" width="12" height="8.800" rx="1"/><path d="M7 9.600v3.200M3.500 13h7"/></svg>
<svg class="abs" style="left:1825px;top:262px" width="12" height="14" viewBox="0 0 12 14" fill="none" stroke="#0265ff" stroke-width="1.200"><rect x=".8" y=".6" width="10.400" height="12.800" rx="1.500"/><path d="M4 11h4"/></svg>
<div class="abs" style="left:1636px;top:308px;width:124px;height:117px;border:1px solid #ececec;border-radius:12px;background:#fff;overflow:hidden"><div style="height:88px;background:#f2f2f2"></div></div>
<div class="abs" style="left:1772px;top:308px;width:124px;height:117px;border:1px solid #e3edff;border-radius:12px;background:#fff;overflow:hidden"><div style="height:88px;background:linear-gradient(135deg,#eef4ff,#e3edff)"></div></div>
<svg class="abs" style="left:1645px;top:320px" width="106" height="66" viewBox="0 0 106 66">
<rect x="0" y="0" width="106" height="66" rx="5" fill="#fff"/>
<path d="M0 10V5a5 5 0 0 1 5-5h96a5 5 0 0 1 5 5v5z" fill="#d9d9d9"/>
<path d="M31.500 10v56M63.500 10v56M0 28.500h106M0 47.500h106" stroke="#ececec" stroke-width="1"/>
<g fill="#e8e8e8"><rect x="6" y="17" width="19" height="4.500" rx="2.200" fill="#d6d6d6"/><rect x="38" y="17" width="13" height="4.500" rx="2.200"/><rect x="78" y="17" width="18" height="4.500" rx="2.200"/>
<rect x="6" y="36" width="12" height="4.500" rx="2.200"/><rect x="38" y="36" width="17" height="4.500" rx="2.200"/><rect x="78" y="36" width="22" height="4.500" rx="2.200"/>
<rect x="6" y="54.500" width="18" height="4.500" rx="2.200"/><rect x="38" y="54.500" width="20" height="4.500" rx="2.200" fill="#d6d6d6"/><rect x="78" y="54.500" width="15" height="4.500" rx="2.200"/></g>
<g fill="#d0d0d0"><circle cx="72" cy="19.200" r="2.200"/><circle cx="72" cy="38.200" r="2.200"/><circle cx="72" cy="56.700" r="2.200"/></g>
</svg>
<svg class="abs" style="left:1781px;top:320px" width="106" height="68" viewBox="0 0 106 68">
<rect x="8" y="56" width="90" height="10" rx="5" fill="#edf3ff"/>
<rect x="0" y="0" width="106" height="61" rx="6" fill="#fff"/>
<rect x="10" y="16" width="29" height="29" rx="5" fill="#e8f0ff"/>
<circle cx="18.500" cy="24.500" r="2.800" fill="#ff6a1a"/>
<path d="M10 36l4.500-4.500q1.500-1.500 3 0L31 45H15a5 5 0 0 1-5-5z" fill="#0265ff"/>
<path d="M21 39l7-8.500q2-2.200 4 0L39 38v2a5 5 0 0 1-5 5H27z" fill="#4cc0ea"/>
<rect x="47" y="17" width="38" height="4.500" rx="2.200" fill="#0265ff"/>
<rect x="47" y="29" width="27" height="4.500" rx="2.200" fill="#e6efff"/>
<rect x="47" y="40" width="49" height="4.500" rx="2.200" fill="#e6efff"/>
</svg>
<div class="t" style="left:1636px;top:401px;width:124px;text-align:center;color:#555">表格</div>
<div class="t" style="left:1772px;top:401px;width:124px;text-align:center;color:#0265ff">卡片</div>
<div class="t" style="left:1636px;top:447px;font-weight:bold;color:#111">封面图片</div>
<div class="abs seg" style="left:1636px;top:476px;width:260px;height:34px"></div>
<div class="abs segon" style="left:1638px;top:478px;width:127px;height:30px"></div>
<div class="t" style="left:1638px;top:483px;width:127px;text-align:center;color:#0265ff">展示</div>
<div class="t" style="left:1767px;top:483px;width:127px;text-align:center;color:#111">不展示</div>
<div class="t" style="left:1636px;top:527px;color:#333">封面来源</div>
<div class="abs" style="left:1704px;top:520px;width:192px;height:33px;border:1px solid #0265ff;border-radius:4px;background:#fff"></div>
<div class="t" style="left:1715px;top:527px;color:#111">图片</div>
<svg class="abs" style="left:1874px;top:530px" width="14" height="14" viewBox="0 0 14 14"><circle cx="7" cy="7" r="7" fill="#8c8c8c"/><path d="M4 4l6 6M10 4l-6 6" stroke="#fff" stroke-width="1.300"/></svg>
<div class="abs" style="left:1705px;top:518px;width:195px;height:36px;border:3px solid #e8381f;border-radius:6px"></div>
<div class="abs" style="left:1705px;top:652px;width:191px;height:32px;border:1px solid #d9d9d9;border-radius:4px"></div>
<div class="abs" style="left:1636px;top:695px;width:16px;height:16px;border-radius:2px;background:#0265ff"></div><svg class="abs" style="left:1638px;top:699px" width="12" height="9" viewBox="0 0 12 9" fill="none" stroke="#fff" stroke-width="2"><path d="M1.300 4.500l3.200 3.200L10.700 1.300"/></svg>
<div class="t" style="left:1660px;top:693px;color:#111">显示提交人和提交时间</div>
<div class="t" style="left:1636px;top:735px;font-weight:bold;color:#111">布局</div>
<div class="abs seg" style="left:1636px;top:764px;width:260px;height:34px"></div>
<div class="abs segon" style="left:1638px;top:766px;width:84px;height:30px"></div>
<div class="t" style="left:1638px;top:772px;width:84px;text-align:center;color:#0265ff">1列</div>
<div class="t" style="left:1724px;top:772px;width:84px;text-align:center;color:#111">2列</div>
<div class="t" style="left:1810px;top:772px;width:84px;text-align:center;color:#111">3列</div>
<div class="t" style="left:1636px;top:821px;font-weight:bold;color:#111">显示字段</div>
<svg class="abs" style="left:1699px;top:824px" width="14" height="14" viewBox="0 0 14 14" fill="none" stroke="#999" stroke-width="1"><circle cx="7" cy="7" r="6.400"/></svg>
<div class="t" style="left:1699px;top:821px;width:14px;text-align:center;font-size:10px;color:#999">?</div>
<div class="abs" style="left:1788px;top:824px;width:16px;height:16px;border-radius:2px;background:#0265ff"></div><svg class="abs" style="left:1790px;top:828px" width="12" height="9" viewBox="0 0 12 9" fill="none" stroke="#fff" stroke-width="2"><path d="M1.300 4.500l3.200 3.200L10.700 1.300"/></svg>
<div class="t" style="left:1812px;top:821px;color:#111">显示字段标题</div>
<div class="abs" style="left:1636px;top:853px;width:260px;height:30px;border:1px solid #d9d9d9;border-radius:4px"></div>
<div class="t" style="left:1647px;top:858px;color:#111">自定义</div>
<svg class="abs" style="left:1874px;top:864px" width="12" height="8" viewBox="0 0 12 8" fill="none" stroke="#444" stroke-width="1.200"><path d="M1.500 1.500l4.500 4.500 4.500-4.500"/></svg>
<div class="abs" style="left:1644px;top:892px;width:1px;height:3px;background:#0265ff"></div>
<div class="abs" style="left:1620px;top:895px;width:300px;height:50px;background:#fff;border-top:1px solid #e0e0e0"></div>
<div class="abs" style="left:1636px;top:905px;width:70px;height:31px;background:#0265ff;border-radius:4px"></div>
<div class="t" style="left:1636px;top:911px;width:70px;text-align:center;color:#fff">确定</div>
<div class="abs" style="left:1718px;top:905px;width:70px;height:31px;border:1px solid #d9d9d9;border-radius:4px;background:#fff"></div>
<div class="t" style="left:1718px;top:911px;width:70px;text-align:center;color:#111">取消</div>
<div class="abs" style="left:1610px;top:560px;width:300px;height:113px;background:#fff;border-radius:6px;box-shadow:0 2px 10px rgba(0,0,0,.10)"></div>
<svg class="abs" style="left:1622px;top:570px" width="16" height="16" viewBox="0 0 16 16" fill="none" stroke="#666" stroke-width="1.200"><circle cx="7" cy="7" r="5.500"/><path d="M11 11l3.500 3.500" stroke-linecap="round"/></svg>
<div class="abs" style="left:1646px;top:570px;width:1px;height:16px;background:#222"></div>
<div class="abs" style="left:1610px;top:595px;width:300px;height:1px;background:#e4e4e4"></div>
<div class="abs" style="left:1618px;top:602px;width:288px;height:32px;background:#f0f6ff;border-radius:3px"></div>
<div class="t" style="left:1624px;top:608px;color:#0265ff">图片</div>
<svg class="abs" style="left:1884px;top:613px" width="10" height="8" viewBox="0 0 10 8" fill="none" stroke="#0265ff" stroke-width="1.200"><path d="M1 4l2.800 2.800L9 1"/></svg>
<div class="t" style="left:1624px;top:642px;color:#111">手写签名</div>
<div class="abs" style="left:1616px;top:599px;width:298px;height:76px;border:3px solid #e8381f;border-radius:7px"></div>
<!--/CONFIG-->
</body>
</html>
